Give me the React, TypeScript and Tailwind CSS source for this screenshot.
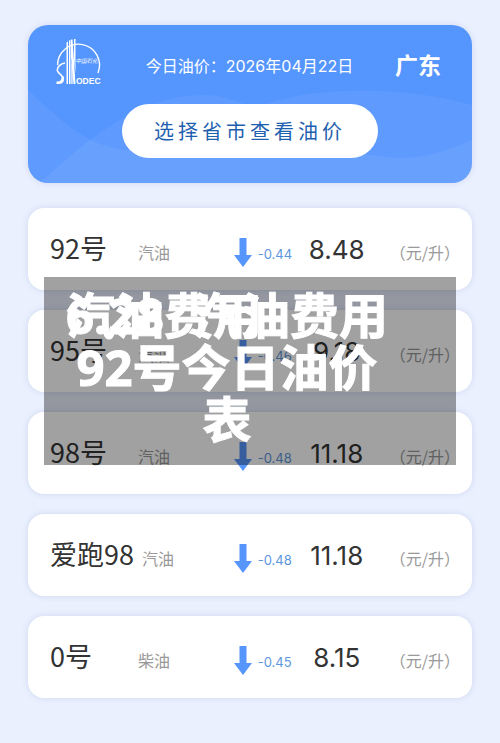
interface IFuelPrice {
    name: string;
    kind: string;
    change: string;
    price: string;
}

const prices: IFuelPrice[] = [
    { name: "92号", kind: "汽油", change: "-0.44", price: "8.48" },
    { name: "95号", kind: "汽油", change: "-0.46", price: "9.18" },
    { name: "98号", kind: "汽油", change: "-0.48", price: "11.18" },
    { name: "爱跑98", kind: "汽油", change: "-0.48", price: "11.18" },
    { name: "0号", kind: "柴油", change: "-0.45", price: "8.15" },
];

function Logo() {
    return (
        <svg className="w-12 h-12 shrink-0 self-start" viewBox="0 0 48 48" fill="none" role="img" aria-label="SINODEC">
            <path d="M1.500 28A21 21 0 1 1 42 36" stroke="#fff" strokeWidth="1.4" />
            <path d="M10.500 47V5.500L12 4.500V47Z M13 47V3.500L14.500 3V47Z" fill="#fff" />
            <path d="M15 2.500H16.500L19.500 47H17.500L15 20Z M18 2H19.500V36L18 22Z" fill="#fff" />
            <path d="M15.300 24V47H16.600V32Z" fill="#fff" />
            <path d="M9 26C5 26.500 0.500 30 1.500 34C2.500 37 7.500 38.500 7.500 42" stroke="#fff" strokeWidth="1.600" />
            <path d="M7.500 40C9 44 7 47 3 47H0.500V44.500C3 45 6 44 5.500 39Z" fill="#fff" />
            <text x="19.500" y="26" fill="#fff" fontSize="5.500" fontFamily="Noto Sans CJK SC, sans-serif" fontStyle="italic">中国石化</text>
            <text x="20" y="47" fill="#fff" fontSize="8.500" fontWeight="700" fontFamily="Liberation Sans, sans-serif">ODEC</text>
        </svg>
    );
}

function Waves() {
    return (
        <svg className="absolute inset-0 w-full h-full" viewBox="0 0 444 158" preserveAspectRatio="none" aria-hidden="true">
            <path d="M0 65C25 88 50 112 75 120C150 143 180 95 240 78C300 60 380 62 444 80V158H0Z" fill="#fff" fillOpacity="0.06" />
            <path d="M15 155C60 115 110 70 175 70C235 70 280 132 375 133C400 133 430 122 444 115V158H12Z" fill="#fff" fillOpacity="0.06" />
        </svg>
    );
}

function DownArrow() {
    return (
        <svg className="w-[18px] h-[29px] mt-2 shrink-0 self-center" viewBox="0 0 18 29" aria-hidden="true">
            <path d="M5.500 0H12.500V17H18L9 29L0 17H5.500Z" fill="#5696fc" />
        </svg>
    );
}

function PriceCard({ item }: { item: IFuelPrice }) {
    return (
        <li className="flex items-center h-[82px] rounded-2xl bg-white pl-[22px] pr-3 pb-0.5 shadow-[0_0_6px_rgba(100,120,170,0.2)]">
            <div className="flex flex-1 items-baseline whitespace-nowrap">
                <span className="min-w-[88px] pr-2 text-[27px] leading-10 text-[#333]">{item.name}</span>
                <span className="flex-1 text-base text-[#999]">{item.kind}</span>
                <DownArrow />
                <span className="ml-1.5 w-9 font-[Inter,sans-serif] text-[13px] text-[#5b97dc]">{item.change}</span>
                <span className="w-[86px] text-center font-[Inter,sans-serif] text-[26px] text-[#333]">{item.price}</span>
                <span className="ml-2.5 text-base text-[#999]">（元/升）</span>
            </div>
        </li>
    );
}

export default function App() {
    return (
        <main className="min-h-screen bg-[#eaf0fe] px-7 pt-[25px] pb-11 font-['Noto_Sans_CJK_SC',sans-serif]">
            <header className="relative overflow-hidden rounded-[20px] bg-[#5595fe] pt-3 pb-[25px] shadow-[0_0_6px_rgba(100,120,170,0.2)]">
                <Waves />
                <div className="relative flex h-[58px] items-center justify-between pl-7 pr-[31px] text-white">
                    <Logo />
                    <p className="font-[Inter,'Noto_Sans_CJK_SC',sans-serif] text-base">今日油价：2026年04月22日</p>
                    <h2 className="pb-1 text-[23px] font-bold">广东</h2>
                </div>
                <button
                    type="button"
                    className="relative mx-auto mt-[9px] block h-[54px] w-64 rounded-full bg-white text-xl tracking-[4px] text-[#1f5fb0]"
                >
                    选择省市查看油价
                </button>
            </header>

            <section className="relative mt-[25px]">
                <ul className="flex flex-col gap-5">
                    {prices.map((item) => (
                        <PriceCard key={item.name} item={item} />
                    ))}
                </ul>
                <div className="absolute inset-x-4 top-[69px] flex justify-center bg-black/37 pt-3 pb-5 pr-[46px] text-white">
                    <h1 className="text-center font-['Noto_Sans','Noto_Sans_CJK_SC',sans-serif] text-[49px] leading-[52px] font-bold whitespace-nowrap [-webkit-text-stroke:1px_white]">
                        <span className="relative block">
                            <span className="absolute left-0">汽油费用</span>
                            <span className="flex justify-between gap-7">
                                <span>6.28</span>
                                <span>汽油费用</span>
                            </span>
                        </span>
                        <span className="block">92号今日油价</span>
                        <span className="block">表</span>
                    </h1>
                </div>
            </section>
        </main>
    );
}
